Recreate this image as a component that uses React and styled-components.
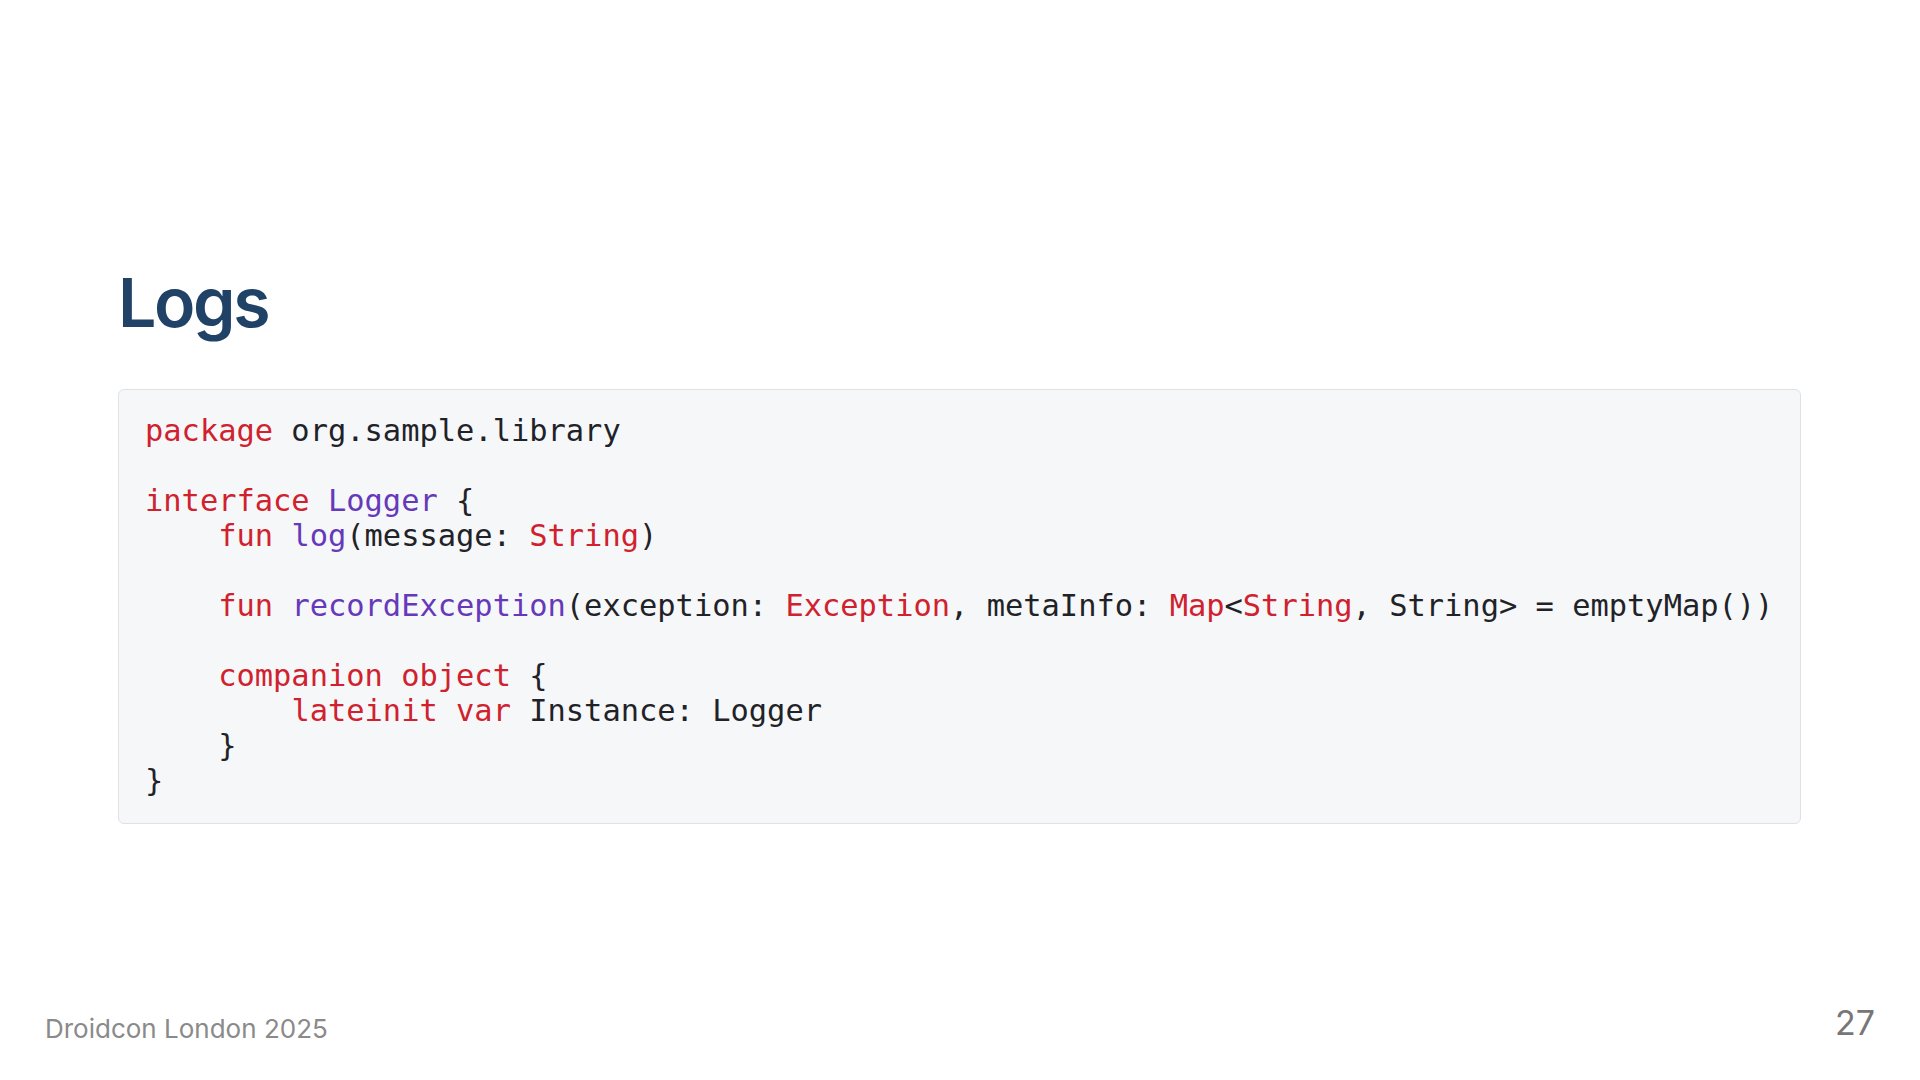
import React from 'react';
import styled, { createGlobalStyle } from 'styled-components';

const GlobalStyle = createGlobalStyle`
  html, body {
    margin: 0;
    padding: 0;
    background: #fff;
  }
`;

const colors = {
  title: '#1f4266',
  keyword: '#cf222e',
  entity: '#6639ba',
  text: '#1f2328',
  muted: '#8a8a8a',
};

const Slide = styled.div`
  width: 1920px;
  height: 1080px;
  display: flex;
  flex-direction: column;
  box-sizing: border-box;
  font-family: Inter, "Liberation Sans", sans-serif;
  overflow: hidden;
`;

const Main = styled.main`
  padding: 261px 119px 0 118px;
`;

const Title = styled.h1`
  margin: 0 0 45px;
  font-size: 68px;
  line-height: 83px;
  font-weight: 600;
  letter-spacing: -2.4px;
  color: ${colors.title};
`;

const CodeBlock = styled.pre`
  margin: 0;
  padding: 23px 26px 25px;
  background: #f6f7f9;
  border: 1px solid #dfe1e5;
  border-radius: 6px;
  font-family: "DejaVu Sans Mono", "Liberation Mono", monospace;
  font-size: 30.4px;
  line-height: 35px;
  color: ${colors.text};
  white-space: pre;
`;

const Token = styled.span`
  color: ${props => colors[props.kind] || colors.text};
`;

const Footer = styled.footer`
  margin-top: auto;
  display: flex;
  justify-content: space-between;
  align-items: flex-end;
  padding: 0 45px 38px 45px;
`;

const Event = styled.span`
  font-size: 26px;
  line-height: 1;
  color: ${colors.muted};
`;

const PageNumber = styled.span`
  font-size: 34px;
  line-height: 1;
  margin-bottom: 2px;
  color: #777;
`;

const K = ({ children }) => <Token kind="keyword">{children}</Token>;
const E = ({ children }) => <Token kind="entity">{children}</Token>;

const App = () => (
  <Slide>
    <GlobalStyle />
    <Main>
      <Title>Logs</Title>
      <CodeBlock>
        <K>package</K> org.sample.library{'\n'}
        {'\n'}
        <K>interface</K> <E>Logger</E> {'{'}{'\n'}
        {'    '}<K>fun</K> <E>log</E>(message: <K>String</K>){'\n'}
        {'\n'}
        {'    '}<K>fun</K> <E>recordException</E>(exception: <K>Exception</K>, metaInfo: <K>Map</K>{'<'}<K>String</K>, String{'>'} = emptyMap()){'\n'}
        {'\n'}
        {'    '}<K>companion</K> <K>object</K> {'{'}{'\n'}
        {'        '}<K>lateinit</K> <K>var</K> Instance: Logger{'\n'}
        {'    }'}{'\n'}
        {'}'}
      </CodeBlock>
    </Main>
    <Footer>
      <Event>Droidcon London 2025</Event>
      <PageNumber>27</PageNumber>
    </Footer>
  </Slide>
);

export default App;
